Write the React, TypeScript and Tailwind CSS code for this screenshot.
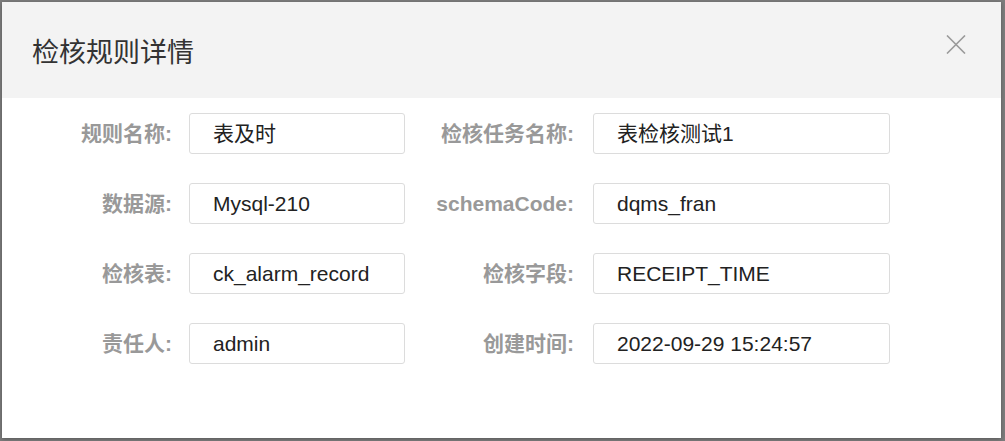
interface Field {
  label: string;
  value: string;
}

const rows: [Field, Field][] = [
  [{ label: '规则名称:', value: '表及时' }, { label: '检核任务名称:', value: '表检核测试1' }],
  [{ label: '数据源:', value: 'Mysql-210' }, { label: 'schemaCode:', value: 'dqms_fran' }],
  [{ label: '检核表:', value: 'ck_alarm_record' }, { label: '检核字段:', value: 'RECEIPT_TIME' }],
  [{ label: '责任人:', value: 'admin' }, { label: '创建时间:', value: '2022-09-29 15:24:57' }],
];

const font = { fontFamily: '"Liberation Sans", "Noto Sans CJK SC", sans-serif' };

function CloseIcon() {
  return (
    <svg width="20" height="19" viewBox="0 0 20 19" className="text-[#9a9a9a] self-start mt-[33px]">
      <path d="M1 0.5 L19 18.5 M19 0.5 L1 18.5" stroke="currentColor" strokeWidth="1.6" fill="none" />
    </svg>
  );
}

export default function App() {
  return (
    <div className="w-[1005px] h-[441px] bg-[#7c7c7c] pl-[2px] pt-[2px] overflow-hidden" style={font}>
      {/* DETAIL MODAL */}
      <div className="w-[999px] h-[436px] bg-white flex flex-col shadow-[0_1px_4px_rgba(0,0,0,0.3)]">
        {/* Header */}
        <div className="h-[96px] bg-[#f3f3f3] flex items-center justify-between pl-[30px] pr-[35px]">
          <span className="text-[27px] text-[#333] font-['Noto_Sans_CJK_SC'] leading-none">检核规则详情</span>
          <CloseIcon />
        </div>

        {/* Body */}
        <div className="flex flex-col gap-[29px] pt-[15px]">
          {rows.map(([a, b]) => (
            <div key={a.label} className="flex items-center h-[41px]">
              <span className="w-[170px] text-right text-[21px] font-bold text-[#999]">{a.label}</span>
              <div className="ml-[17px] w-[216px] h-[41px] border border-[#dcdcdc] rounded-[3px] flex items-center pl-[23px] text-[21px] text-[#222]">
                {a.value}
              </div>
              <span className="w-[169px] text-right text-[21px] font-bold text-[#999]">{b.label}</span>
              <div className="ml-[19px] w-[297px] h-[41px] border border-[#dcdcdc] rounded-[3px] flex items-center pl-[23px] text-[21px] text-[#222]">
                {b.value}
              </div>
            </div>
          ))}
        </div>
      </div>
    </div>
  );
}
